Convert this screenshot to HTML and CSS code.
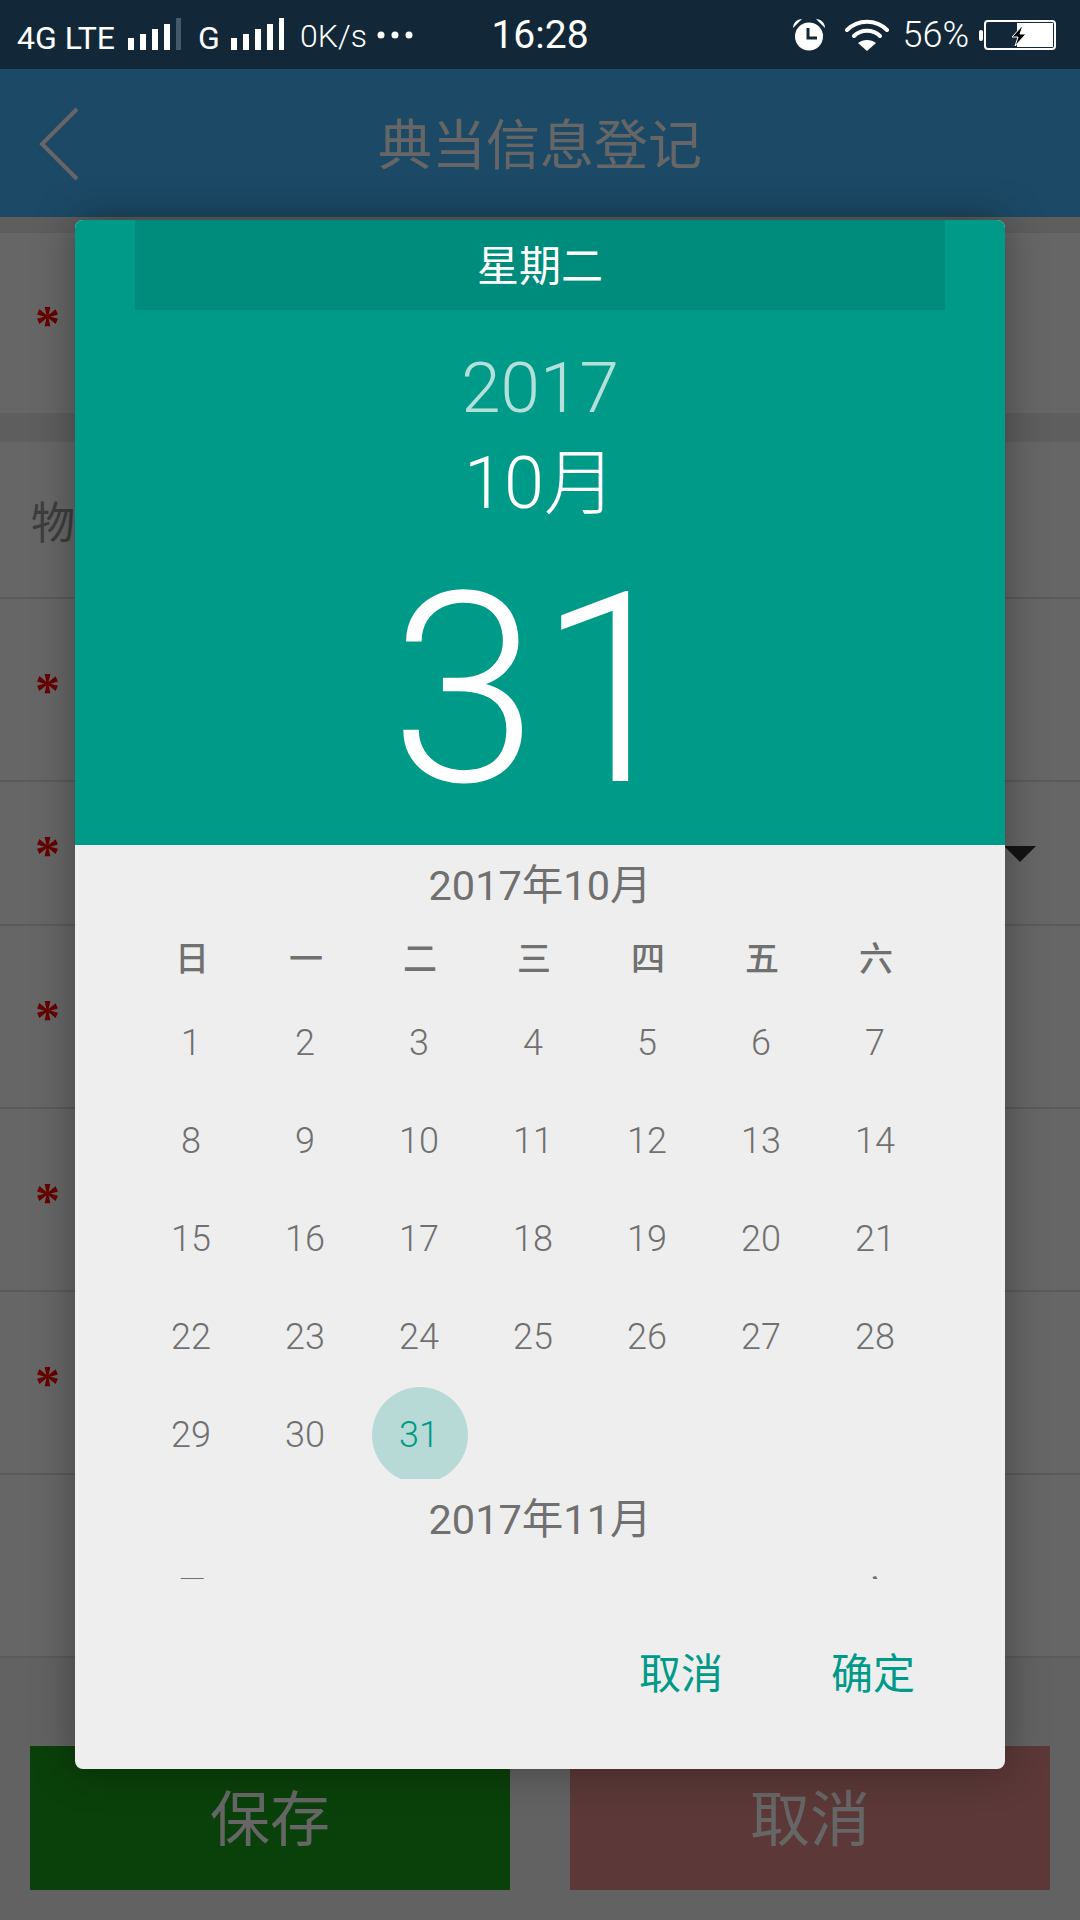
FILE: index.html
```html
<!DOCTYPE html>
<html lang="zh-CN">
<head>
  <meta charset="UTF-8">
  <meta name="viewport" content="width=device-width, initial-scale=1.0">
  <title>典当信息登记</title>
  <link rel="stylesheet" href="styles.css">
</head>
<body>

  <div class="status-bar">
    <div class="status-left">
      <span class="net-label">4G LTE</span>
      <svg class="signal-one" width="54" height="32" viewBox="0 0 54 32">
        <rect x="0" y="20" width="6" height="12" fill="#fff"/>
        <rect x="12" y="16" width="6" height="16" fill="#fff"/>
        <rect x="24" y="11" width="6" height="21" fill="#fff"/>
        <rect x="36" y="6" width="6" height="26" fill="#fff"/>
        <rect x="48" y="0" width="5" height="32" fill="#46596a"/>
      </svg>
      <span class="net-g">G</span>
      <svg class="signal-two" width="54" height="32" viewBox="0 0 54 32">
        <rect x="0" y="20" width="6" height="12" fill="#fff"/>
        <rect x="12" y="16" width="6" height="16" fill="#fff"/>
        <rect x="24" y="11" width="6" height="21" fill="#fff"/>
        <rect x="36" y="6" width="6" height="26" fill="#fff"/>
        <rect x="48" y="0" width="5" height="32" fill="#fff"/>
      </svg>
      <span class="net-speed">0K/s</span>
      <svg class="more-dots" width="36" height="8" viewBox="0 0 36 8">
        <circle cx="4" cy="4" r="3.5" fill="#fff"/>
        <circle cx="18" cy="4" r="3.5" fill="#fff"/>
        <circle cx="32" cy="4" r="3.5" fill="#fff"/>
      </svg>
    </div>
    <div class="status-time">16:28</div>
    <div class="status-right">
      <svg class="alarm" width="34" height="32" viewBox="0 0 34 32">
        <circle cx="17" cy="17.5" r="14" fill="#fff"/>
        <path d="M1 9 C1 4 5 0 10 0 Z" fill="#fff"/>
        <path d="M33 9 C33 4 29 0 24 0 Z" fill="#fff"/>
        <path d="M16 9 V19 H25" fill="none" stroke="#122838" stroke-width="3"/>
      </svg>
      <svg class="wifi" width="44" height="32" viewBox="0 0 44 32">
        <path d="M2 11 C13 0 31 0 42 11" fill="none" stroke="#fff" stroke-width="4" stroke-linecap="round"/>
        <path d="M9 17 C16 10 28 10 35 17" fill="none" stroke="#fff" stroke-width="4" stroke-linecap="round"/>
        <path d="M22 32 L13 24 C18 20 26 20 31 24 Z" fill="#fff"/>
      </svg>
      <span class="battery-text">56%</span>
      <svg class="battery" width="77" height="30" viewBox="0 0 77 30">
        <rect x="0" y="10" width="4" height="11" rx="2" fill="#fff"/>
        <rect x="6" y="1" width="70" height="28" rx="3" fill="none" stroke="#fff" stroke-width="2"/>
        <rect x="38" y="3" width="36" height="24" fill="#fff"/>
        <path d="M44 5 L33 17 H39 L36 26 L47 14 H41 Z" fill="#000" stroke="#fff" stroke-width="1"/>
      </svg>
    </div>
  </div>

  <div class="page">
    <div class="app-bar">
      <svg class="back-icon" width="40" height="74" viewBox="0 0 40 74">
        <path d="M38 2 L3 37 L38 72" fill="none" stroke="#fff" stroke-width="4"/>
      </svg>
      <div class="app-title">典当信息登记</div>
    </div>

    <div class="form">
      <div class="row row-first"><span class="star">*</span></div>
      <div class="row row-goods"><span class="row-label">物</span></div>
      <div class="row row-tall"><span class="star">*</span></div>
      <div class="row row-short"><span class="star">*</span><span class="select-arrow"></span></div>
      <div class="row row-tall"><span class="star">*</span></div>
      <div class="row row-tall"><span class="star">*</span></div>
      <div class="row row-tall"><span class="star">*</span></div>
      <div class="row row-tall"></div>
    </div>

    <div class="buttons">
      <div class="btn btn-save">保存</div>
      <div class="btn btn-cancel">取消</div>
    </div>

    <div class="overlay">
      <div class="dialog">
        <div class="dialog-head">
          <div class="weekday-bar">星期二</div>
          <div class="head-year">2017</div>
          <div class="head-month">10月</div>
          <div class="head-day">31</div>
        </div>
        <div class="calendar">
          <div class="month">
            <div class="month-title">2017年10月</div>
            <div class="week-row">
              <span>日</span><span>一</span><span>二</span><span>三</span><span>四</span><span>五</span><span>六</span>
            </div>
            <div class="days">
              <span>1</span><span>2</span><span>3</span><span>4</span><span>5</span><span>6</span><span>7</span>
              <span>8</span><span>9</span><span>10</span><span>11</span><span>12</span><span>13</span><span>14</span>
              <span>15</span><span>16</span><span>17</span><span>18</span><span>19</span><span>20</span><span>21</span>
              <span>22</span><span>23</span><span>24</span><span>25</span><span>26</span><span>27</span><span>28</span>
              <span>29</span><span>30</span><span class="selected">31</span>
            </div>
          </div>
          <div class="month">
            <div class="month-title">2017年11月</div>
            <div class="week-row">
              <span>日</span><span>一</span><span>二</span><span>三</span><span>四</span><span>五</span><span>六</span>
            </div>
          </div>
        </div>
        <div class="dialog-actions">
          <span class="action">取消</span>
          <span class="action">确定</span>
        </div>
      </div>
    </div>
  </div>

</body>
</html>
```

FILE: styles.css
```css
* {
  box-sizing: border-box;
}

body {
  margin: 0;
  width: 1080px;
  height: 1920px;
  overflow: hidden;
  background: #fff;
  font-family: Roboto, "Noto Sans CJK SC", sans-serif;
}

.status-bar {
  height: 69px;
  background: #122838;
  color: #fff;
  display: grid;
  grid-template-columns: 1fr auto 1fr;
  align-items: center;
}

.status-left {
  display: flex;
  align-items: flex-end;
  padding-left: 17px;
  height: 32px;
  margin-top: -1px;
}

.net-label {
  font-size: 32px;
  line-height: 30px;
  width: 111px;
  margin-bottom: -3px;
  white-space: nowrap;
}

.net-g {
  font-size: 32px;
  line-height: 30px;
  margin-left: 16px;
  width: 33px;
  margin-bottom: -3px;
}

.net-speed {
  font-size: 32px;
  line-height: 30px;
  font-weight: 300;
  margin-left: 15px;
  width: 77px;
  margin-bottom: -1px;
}

.more-dots {
  margin-bottom: 11px;
}

.status-time {
  font-size: 39px;
  font-weight: 400;
  line-height: 44px;
}

.status-right {
  display: flex;
  align-items: center;
  justify-content: flex-end;
  padding-right: 24px;
}

.alarm {
  margin-right: 19px;
}

.wifi {
  margin-right: 13px;
}

.battery-text {
  font-size: 36px;
  font-weight: 300;
  line-height: 34px;
  margin-right: 10px;
}

.page {
  position: relative;
  height: 1851px;
}

.app-bar {
  height: 148px;
  background: #46b6ff;
  display: flex;
  align-items: center;
  justify-content: center;
  position: relative;
}

.back-icon {
  position: absolute;
  left: 39px;
  top: 38px;
}

.app-title {
  color: #fff;
  font-size: 54px;
  margin-top: -4px;
}

.form {
  padding-top: 16px;
  background: #ebebeb;
}

.row {
  position: relative;
  display: flex;
  align-items: center;
  background: #fff;
  border-bottom: 2px solid #e0e0e0;
  padding-left: 35px;
}

.row-first {
  height: 180px;
  border-bottom: 0;
  margin-bottom: 29px;
}

.row-goods {
  height: 157px;
  padding-left: 31px;
}

.row-tall {
  height: 183px;
}

.row-short {
  height: 144px;
}

.star {
  color: #ff0000;
  font-family: "Liberation Serif", serif;
  font-size: 50px;
  font-weight: 700;
  line-height: 50px;
}

.row-label {
  color: #999;
  font-size: 44px;
}

.select-arrow {
  position: absolute;
  right: 44px;
  top: 64px;
  border-left: 16px solid transparent;
  border-right: 16px solid transparent;
  border-top: 16px solid #333;
}

.buttons {
  display: flex;
  justify-content: space-between;
  padding: 88px 30px 0;
  background: #f5f5f5;
  height: 263px;
}

.btn {
  width: 480px;
  height: 144px;
  color: #fff;
  font-size: 60px;
  line-height: 60px;
  padding-top: 6px;
  display: flex;
  align-items: center;
  justify-content: center;
}

.btn-save {
  background: #19a019;
}

.btn-cancel {
  background: #e68c8c;
}

.overlay {
  position: absolute;
  inset: 0;
  background: rgba(0, 0, 0, 0.6);
  display: flex;
  justify-content: center;
  align-items: flex-start;
  padding-top: 151px;
}

.dialog {
  width: 930px;
  height: 1549px;
  background: #eee;
  border-radius: 8px;
  box-shadow: 0 0 40px rgba(0, 0, 0, 0.35);
  overflow: hidden;
}

.dialog-head {
  height: 625px;
  background: #009a88;
  color: #fff;
  text-align: center;
  display: flex;
  flex-direction: column;
  align-items: center;
}

.weekday-bar {
  width: 810px;
  height: 90px;
  background: #008c7c;
  font-size: 42px;
  line-height: 94px;
}

.head-year {
  margin-top: 38px;
  font-size: 71px;
  font-weight: 300;
  line-height: 80px;
  color: #b3e0da;
}

.head-month {
  font-size: 72px;
  font-weight: 300;
  line-height: 96px;
  margin-top: 8px;
}

.head-day {
  font-size: 266px;
  font-weight: 300;
  line-height: 250px;
  margin-top: 33px;
  margin-right: 4px;
}

.calendar {
  height: 734px;
  overflow: hidden;
  color: #707070;
}

.month {
  height: 634px;
  overflow: hidden;
}

.month-title {
  height: 82px;
  line-height: 82px;
  text-align: center;
  font-size: 41.5px;
}

.week-row,
.days {
  display: grid;
  grid-template-columns: repeat(7, 114px);
  padding-left: 59px;
}

.week-row {
  height: 67px;
  padding-bottom: 9px;
  padding-left: 60px;
  align-items: center;
  font-size: 34px;
  text-align: center;
  font-weight: 500;
}

.days {
  grid-auto-rows: 98px;
  font-size: 36px;
  font-weight: 300;
  justify-items: center;
  align-items: center;
}

.days span {
  width: 96px;
  height: 96px;
  line-height: 96px;
  text-align: center;
}

.days .selected {
  margin-left: 2px;
  padding-right: 2px;
  background: #b8dad6;
  border-radius: 50%;
  color: #009a88;
}

.dialog-actions {
  height: 190px;
  display: flex;
  justify-content: flex-end;
  align-items: center;
  gap: 108px;
  padding-right: 90px;
  padding-bottom: 7px;
}

.action {
  color: #009a88;
  font-size: 42px;
}
```
